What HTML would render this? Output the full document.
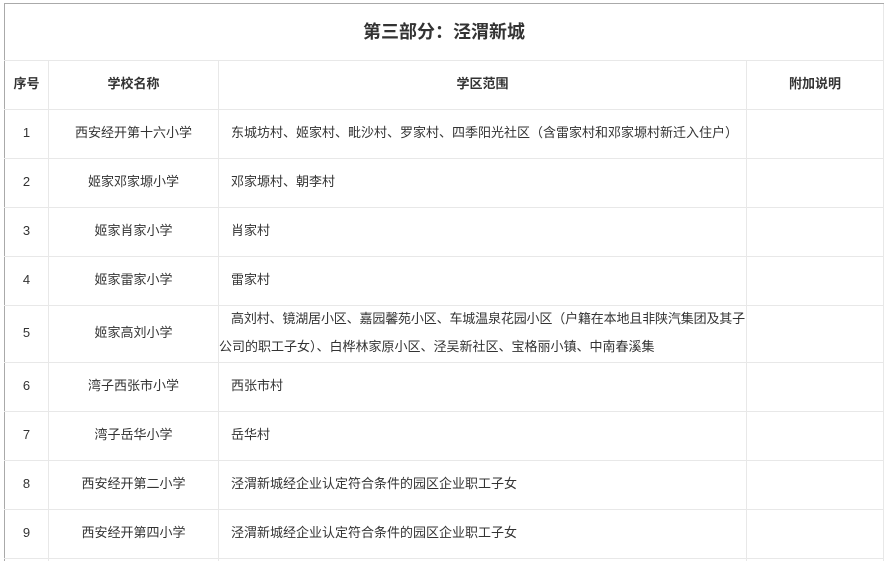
<!DOCTYPE html>
<html><head><meta charset="utf-8"><style>
body{margin:0;background:#fff;font-family:"Liberation Sans","Noto Sans CJK SC",sans-serif;color:#333;font-size:13px;position:relative;width:887px;height:561px;overflow:hidden}
.h{position:absolute;height:1px;background:#e8e8e8;left:4px;width:880px}
.v{position:absolute;width:1px;background:#e8e8e8;top:60px;height:501px}
.t{position:absolute;white-space:nowrap;line-height:20px}
.c{text-align:center}
b{font-weight:bold}
</style></head><body>
<div style="position:absolute;left:4px;top:3px;width:880px;height:1px;background:#aaa"></div>
<div style="position:absolute;left:4px;top:3px;width:1px;height:558px;background:#aaa"></div>
<div style="position:absolute;left:883px;top:4px;width:1px;height:557px;background:#e8e8e8"></div>
<div class="t c" style="left:4px;width:880px;top:20px;line-height:24px;font-size:18px;font-weight:bold">第三部分：泾渭新城</div>
<div class="h" style="top:60px"></div><div class="h" style="top:109px"></div><div class="h" style="top:158px"></div><div class="h" style="top:207px"></div><div class="h" style="top:256px"></div><div class="h" style="top:305px"></div><div class="h" style="top:362px"></div><div class="h" style="top:411px"></div><div class="h" style="top:460px"></div><div class="h" style="top:509px"></div><div class="h" style="top:558px"></div>
<div class="v" style="left:48px"></div><div class="v" style="left:218px"></div><div class="v" style="left:746px"></div>
<div class="t c" style="left:5px;width:43px;top:74px"><b>序号</b></div>
<div class="t c" style="left:49px;width:169px;top:74px"><b>学校名称</b></div>
<div class="t c" style="left:219px;width:527px;top:74px"><b>学区范围</b></div>
<div class="t c" style="left:747px;width:136px;top:74px"><b>附加说明</b></div>

<div class="t c" style="left:5px;width:43px;top:123px">1</div><div class="t c" style="left:49px;width:169px;top:123px">西安经开第十六小学</div><div class="t" style="left:231px;top:123px">东城坊村、姬家村、毗沙村、罗家村、四季阳光社区（含雷家村和邓家塬村新迁入住户）</div>
<div class="t c" style="left:5px;width:43px;top:172px">2</div><div class="t c" style="left:49px;width:169px;top:172px">姬家邓家塬小学</div><div class="t" style="left:231px;top:172px">邓家塬村、朝李村</div>
<div class="t c" style="left:5px;width:43px;top:221px">3</div><div class="t c" style="left:49px;width:169px;top:221px">姬家肖家小学</div><div class="t" style="left:231px;top:221px">肖家村</div>
<div class="t c" style="left:5px;width:43px;top:270px">4</div><div class="t c" style="left:49px;width:169px;top:270px">姬家雷家小学</div><div class="t" style="left:231px;top:270px">雷家村</div>
<div class="t c" style="left:5px;width:43px;top:323px">5</div><div class="t c" style="left:49px;width:169px;top:323px">姬家高刘小学</div><div class="t" style="left:231px;top:309px;letter-spacing:-0.15px">高刘村、镜湖居小区、嘉园馨苑小区、车城温泉花园小区（户籍在本地且非陕汽集团及其子</div><div class="t" style="left:219px;top:337px">公司的职工子女）、白桦林家原小区、泾吴新社区、宝格丽小镇、中南春溪集</div>
<div class="t c" style="left:5px;width:43px;top:376px">6</div><div class="t c" style="left:49px;width:169px;top:376px">湾子西张市小学</div><div class="t" style="left:231px;top:376px">西张市村</div>
<div class="t c" style="left:5px;width:43px;top:425px">7</div><div class="t c" style="left:49px;width:169px;top:425px">湾子岳华小学</div><div class="t" style="left:231px;top:425px">岳华村</div>
<div class="t c" style="left:5px;width:43px;top:474px">8</div><div class="t c" style="left:49px;width:169px;top:474px">西安经开第二小学</div><div class="t" style="left:231px;top:474px">泾渭新城经企业认定符合条件的园区企业职工子女</div>
<div class="t c" style="left:5px;width:43px;top:523px">9</div><div class="t c" style="left:49px;width:169px;top:523px">西安经开第四小学</div><div class="t" style="left:231px;top:523px">泾渭新城经企业认定符合条件的园区企业职工子女</div>
</body></html>
